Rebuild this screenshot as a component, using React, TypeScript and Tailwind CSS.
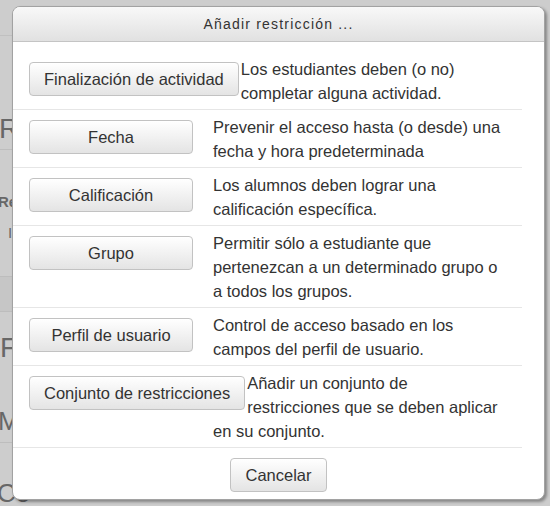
import type { ReactNode } from "react"

type Restriction = {
  label: string
  lines: string[]
}

const restrictions: Restriction[] = [
  { label: "Finalización de actividad", lines: ["Los estudiantes deben (o no)", "completar alguna actividad."] },
  { label: "Fecha", lines: ["Prevenir el acceso hasta (o desde) una", "fecha y hora predeterminada"] },
  { label: "Calificación", lines: ["Los alumnos deben lograr una", "calificación específica."] },
  {
    label: "Grupo",
    lines: ["Permitir sólo a estudiante que", "pertenezcan a un determinado grupo o", "a todos los grupos."],
  },
  { label: "Perfil de usuario", lines: ["Control de acceso basado en los", "campos del perfil de usuario."] },
  {
    label: "Conjunto de restricciones",
    lines: ["Añadir un conjunto de", "restricciones que se deben aplicar", "en su conjunto."],
  },
]

function GrayButton({ children, className = "" }: { children: ReactNode; className?: string }) {
  return (
    <button
      className={`h-[34px] px-[14px] rounded-[4px] border border-[#c2c2c2] bg-gradient-to-b from-white to-[#e4e4e4] text-[#333] text-[16.5px] leading-none shadow-[inset_0_1px_0_rgba(255,255,255,0.9)] ${className}`}
    >
      {children}
    </button>
  )
}

export default function App() {
  return (
    <div className="relative w-[550px] h-[506px] overflow-hidden bg-[#cdcdcd] font-['Liberation_Sans',Arial,sans-serif]">
      {/* page behind the dialog */}
      <div className="flex flex-col w-[160px] text-[#676767]">
        <div className="h-[36px] border-b border-[#c0c0c0]" />
        <div className="h-[114px] border-b border-[#bdbdbd] flex items-end pb-[6px]">
          <span className="text-[28px] leading-none -ml-[1px]">Re</span>
        </div>
        <div className="h-[60px] flex items-end pb-[1px]">
          <span className="text-[15px] font-bold leading-none -ml-[2px]">Re</span>
        </div>
        <div className="h-[30px] flex items-end pl-[8px]">
          <span className="text-[15px] leading-none">I</span>
        </div>
        <div className="h-[37px] border-b border-[#bdbdbd]" />
        <div className="h-[35px] bg-[#c6c6c6] border-b border-[#bdbdbd]" />
        <div className="h-[50px] flex items-end">
          <span className="text-[28px] leading-none">Fi</span>
        </div>
        <div className="h-[81px] flex items-end pb-[8px] border-b border-[#bdbdbd]">
          <span className="text-[26px] leading-none -ml-[2px]">M</span>
        </div>
        <div className="h-[63px] flex items-end">
          <span className="text-[26px] leading-none -ml-[3px]">Co</span>
        </div>
      </div>

      {/* dialog */}
      <div className="absolute left-[12px] top-[6px] w-[533px] h-[494px] flex flex-col rounded-[8px] bg-white border border-[#a2a2a2] shadow-[2px_2px_3px_rgba(0,0,0,0.35)] overflow-hidden text-[#333]">
        <div className="h-[35px] shrink-0 flex items-center justify-center border-b border-[#c4c4c4] bg-gradient-to-b from-[#f8f8f8] to-[#e1e1e1] text-[14px] tracking-[1.2px]">
          Añadir restricción ...
        </div>

        <div className="mt-[10px] mr-[22px] text-[16.5px]">
          {restrictions.map((r, i) => (
            <div
              key={r.label}
              className={`flow-root pl-[16px] pt-[5px] pb-[4px] ${i > 0 ? "border-t border-[#e6e6e6]" : ""}`}
            >
              <GrayButton className="float-left mt-[5px] mr-[2px] min-w-[164px]">{r.label}</GrayButton>
              <div className="ml-[184px] leading-[24px]">
                {r.lines.map((line, j) => (
                  <span key={j}>
                    {line}
                    {j < r.lines.length - 1 && <br />}
                  </span>
                ))}
              </div>
            </div>
          ))}
        </div>

        <div className="border-t border-[#e6e6e6] mr-[22px]" />
        <div className="flex justify-center pt-[10px]">
          <GrayButton>Cancelar</GrayButton>
        </div>
      </div>
    </div>
  )
}
